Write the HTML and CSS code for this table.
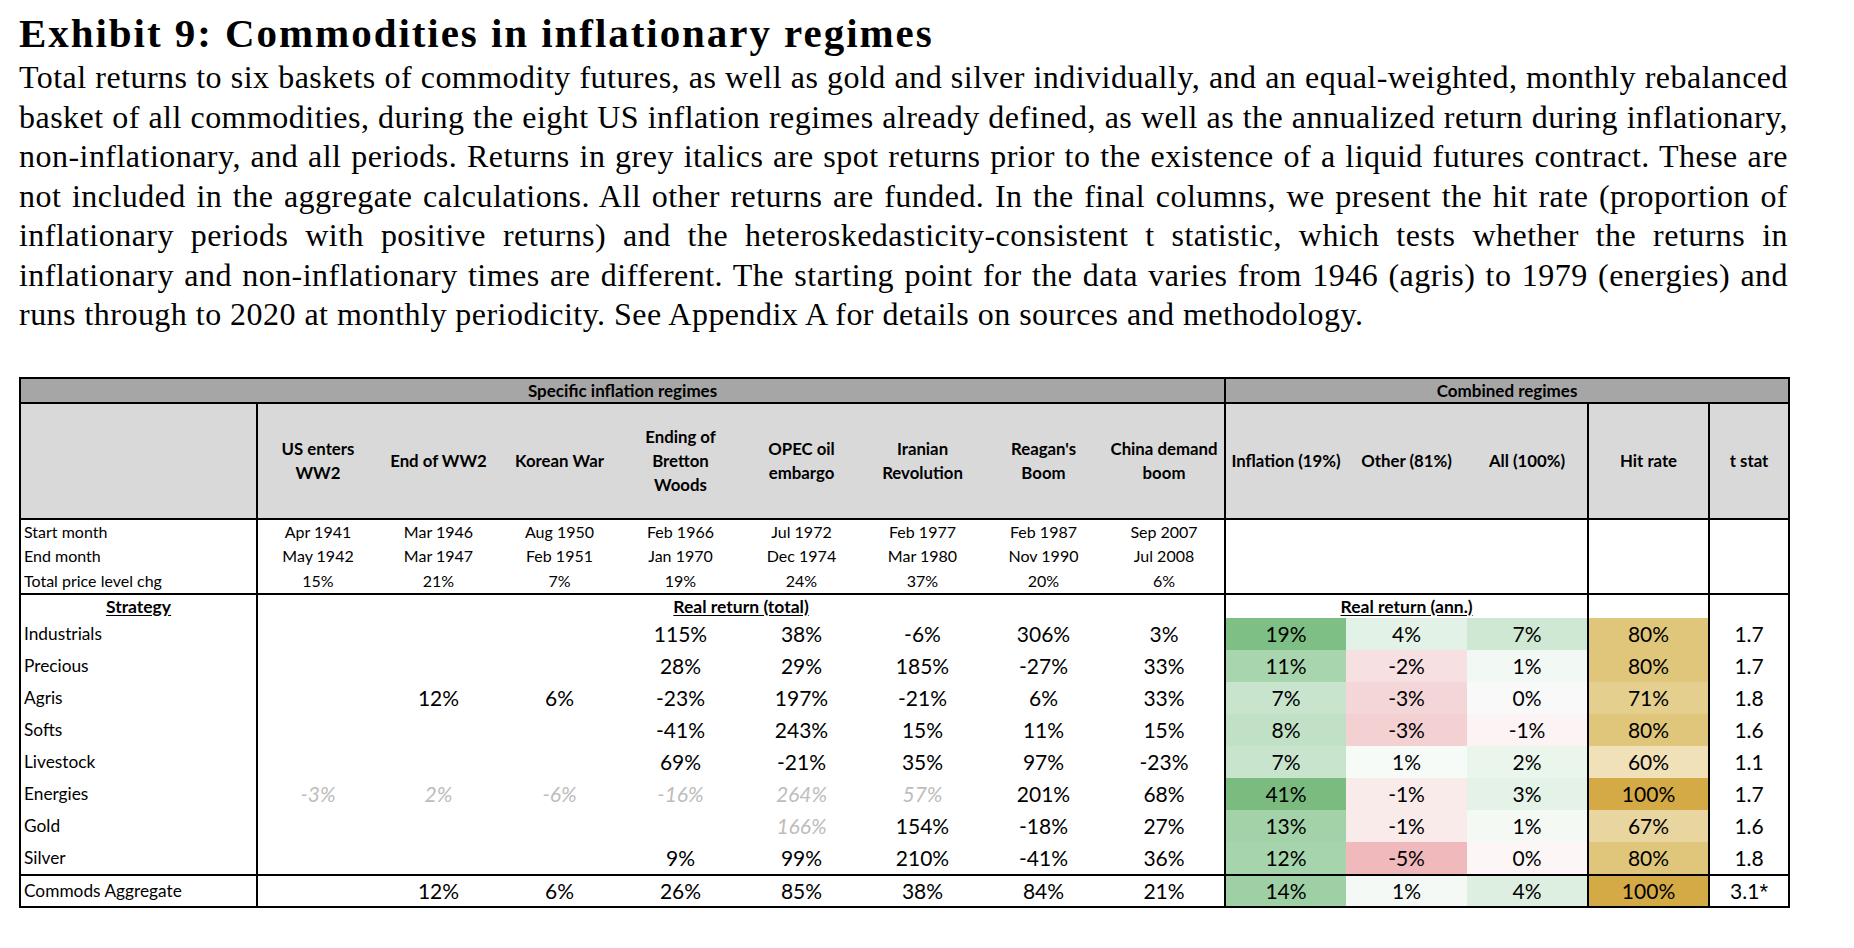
FILE: index.html
```html
<!DOCTYPE html>
<html lang="en">
<head>
<meta charset="utf-8">
<title>Exhibit 9: Commodities in inflationary regimes</title>
<link rel="stylesheet" href="styles.css">
</head>
<body>
<div class="page">
  <h1 class="title">Exhibit 9: Commodities in inflationary regimes</h1>
  <div class="lead">
    <span class="ln">Total returns to six baskets of commodity futures, as well as gold and silver individually, and an equal-weighted, monthly rebalanced</span>
    <span class="ln">basket of all commodities, during the eight US inflation regimes already defined, as well as the annualized return during inflationary,</span>
    <span class="ln">non-inflationary, and all periods. Returns in grey italics are spot returns prior to the existence of a liquid futures contract. These are</span>
    <span class="ln">not included in the aggregate calculations. All other returns are funded. In the final columns, we present the hit rate (proportion of</span>
    <span class="ln">inflationary periods with positive returns) and the heteroskedasticity-consistent t statistic, which tests whether the returns in</span>
    <span class="ln">inflationary and non-inflationary times are different. The starting point for the data varies from 1946 (agris) to 1979 (energies) and</span>
    <span class="ln last">runs through to 2020 at monthly periodicity. See Appendix A for details on sources and methodology.</span>
  </div>

  <table class="exhibit">
    <colgroup>
      <col class="w-label">
      <col class="w-col"><col class="w-col"><col class="w-col"><col class="w-col">
      <col class="w-col"><col class="w-col"><col class="w-col"><col class="w-col">
      <col class="w-col"><col class="w-col"><col class="w-col">
      <col class="w-col"><col class="w-t">
    </colgroup>
    <tr class="group-row">
      <th colspan="9" class="sep">Specific inflation regimes</th>
      <th colspan="5">Combined regimes</th>
    </tr>
    <tr class="head-row">
      <th class="lab sep"></th>
      <th>US enters<br>WW2</th>
      <th>End of WW2</th>
      <th>Korean War</th>
      <th>Ending of<br>Bretton<br>Woods</th>
      <th>OPEC oil<br>embargo</th>
      <th>Iranian<br>Revolution</th>
      <th>Reagan's<br>Boom</th>
      <th class="sep">China demand<br>boom</th>
      <th>Inflation (19%)</th>
      <th>Other (81%)</th>
      <th class="sep">All (100%)</th>
      <th class="sep">Hit rate</th>
      <th>t stat</th>
    </tr>
    <tr class="date-row">
      <td class="lab sep">Start month</td>
      <td>Apr 1941</td><td>Mar 1946</td><td>Aug 1950</td><td>Feb 1966</td><td>Jul 1972</td><td>Feb 1977</td><td>Feb 1987</td><td class="sep">Sep 2007</td>
      <td></td><td></td><td class="sep"></td><td class="sep"></td><td></td>
    </tr>
    <tr class="date-row">
      <td class="lab sep">End month</td>
      <td>May 1942</td><td>Mar 1947</td><td>Feb 1951</td><td>Jan 1970</td><td>Dec 1974</td><td>Mar 1980</td><td>Nov 1990</td><td class="sep">Jul 2008</td>
      <td></td><td></td><td class="sep"></td><td class="sep"></td><td></td>
    </tr>
    <tr class="date-row rule">
      <td class="lab sep">Total price level chg</td>
      <td>15%</td><td>21%</td><td>7%</td><td>19%</td><td>24%</td><td>37%</td><td>20%</td><td class="sep">6%</td>
      <td></td><td></td><td class="sep"></td><td class="sep"></td><td></td>
    </tr>
    <tr class="sub-row">
      <td class="sep"><span class="ul">Strategy</span></td>
      <td colspan="8" class="sep"><span class="ul">Real return (total)</span></td>
      <td colspan="3" class="sep"><span class="ul">Real return (ann.)</span></td>
      <td class="sep"></td>
      <td></td>
    </tr>
    <tr class="data-row">
      <td class="lab sep">Industrials</td>
      <td></td><td></td><td></td><td>115%</td><td>38%</td><td>-6%</td><td>306%</td><td class="sep">3%</td>
      <td style="background:#7ebf86">19%</td><td style="background:#e3f2e6">4%</td><td class="sep" style="background:#cfe8d3">7%</td>
      <td class="sep" style="background:#e0c67a">80%</td><td>1.7</td>
    </tr>
    <tr class="data-row">
      <td class="lab sep">Precious</td>
      <td></td><td></td><td></td><td>28%</td><td>29%</td><td>185%</td><td>-27%</td><td class="sep">33%</td>
      <td style="background:#a8d5ae">11%</td><td style="background:#f7e0e1">-2%</td><td class="sep" style="background:#f2f8f3">1%</td>
      <td class="sep" style="background:#e0c67a">80%</td><td>1.7</td>
    </tr>
    <tr class="data-row">
      <td class="lab sep">Agris</td>
      <td></td><td>12%</td><td>6%</td><td>-23%</td><td>197%</td><td>-21%</td><td>6%</td><td class="sep">33%</td>
      <td style="background:#c8e4cc">7%</td><td style="background:#f5d6d8">-3%</td><td class="sep" style="background:#faf9f9">0%</td>
      <td class="sep" style="background:#e5cf8f">71%</td><td>1.8</td>
    </tr>
    <tr class="data-row">
      <td class="lab sep">Softs</td>
      <td></td><td></td><td></td><td>-41%</td><td>243%</td><td>15%</td><td>11%</td><td class="sep">15%</td>
      <td style="background:#c0e1c5">8%</td><td style="background:#f3d0d2">-3%</td><td class="sep" style="background:#fcf3f4">-1%</td>
      <td class="sep" style="background:#e0c67a">80%</td><td>1.6</td>
    </tr>
    <tr class="data-row">
      <td class="lab sep">Livestock</td>
      <td></td><td></td><td></td><td>69%</td><td>-21%</td><td>35%</td><td>97%</td><td class="sep">-23%</td>
      <td style="background:#c8e4cc">7%</td><td style="background:#f7fbf7">1%</td><td class="sep" style="background:#eaf5ec">2%</td>
      <td class="sep" style="background:#f0e1b8">60%</td><td>1.1</td>
    </tr>
    <tr class="data-row">
      <td class="lab sep">Energies</td>
      <td class="spot">-3%</td><td class="spot">2%</td><td class="spot">-6%</td><td class="spot">-16%</td><td class="spot">264%</td><td class="spot">57%</td><td>201%</td><td class="sep">68%</td>
      <td style="background:#7bbb80">41%</td><td style="background:#faebeb">-1%</td><td class="sep" style="background:#e5f2e7">3%</td>
      <td class="sep" style="background:#d4aa47">100%</td><td>1.7</td>
    </tr>
    <tr class="data-row">
      <td class="lab sep">Gold</td>
      <td></td><td></td><td></td><td></td><td class="spot">166%</td><td>154%</td><td>-18%</td><td class="sep">27%</td>
      <td style="background:#a3d2a9">13%</td><td style="background:#faebeb">-1%</td><td class="sep" style="background:#f4f9f4">1%</td>
      <td class="sep" style="background:#e9d59f">67%</td><td>1.6</td>
    </tr>
    <tr class="data-row rule">
      <td class="lab sep">Silver</td>
      <td></td><td></td><td></td><td>9%</td><td>99%</td><td>210%</td><td>-41%</td><td class="sep">36%</td>
      <td style="background:#a6d4ac">12%</td><td style="background:#f0b9bb">-5%</td><td class="sep" style="background:#fcf6f6">0%</td>
      <td class="sep" style="background:#e0c67a">80%</td><td>1.8</td>
    </tr>
    <tr class="data-row agg">
      <td class="lab sep">Commods Aggregate</td>
      <td></td><td>12%</td><td>6%</td><td>26%</td><td>85%</td><td>38%</td><td>84%</td><td class="sep">21%</td>
      <td style="background:#9ecfa5">14%</td><td style="background:#f4f9f5">1%</td><td class="sep" style="background:#ddefe0">4%</td>
      <td class="sep" style="background:#d4aa47">100%</td><td class="tstat">3.1<span class="star">*</span></td>
    </tr>
  </table>
</div>
</body>
</html>
```

FILE: styles.css
```css
html, body {
  margin: 0;
  padding: 0;
  background: #ffffff;
}

.page {
  width: 1769px;
  padding: 10px 0 0 19px;
  color: #000000;
}

.title {
  margin: 0;
  font-family: "Liberation Serif", "Times New Roman", serif;
  font-weight: 700;
  font-size: 41px;
  line-height: 46px;
  letter-spacing: 1.95px;
}

.lead {
  margin-top: 2px;
  font-family: "Liberation Serif", "Times New Roman", serif;
  font-size: 32px;
  line-height: 39.5px;
  letter-spacing: 0.47px;
}

.ln {
  display: block;
  text-align: justify;
  text-align-last: justify;
  white-space: nowrap;
}

.ln.last {
  text-align-last: left;
}

.exhibit {
  margin-top: 42px;
  border-collapse: collapse;
  table-layout: fixed;
  width: 1769px;
  border: 2px solid #000000;
  font-family: Lato, "Open Sans", sans-serif;
  color: #000000;
}

.w-label { width: 237px; }
.w-col { width: 121px; }
.w-t { width: 80px; }

.exhibit th,
.exhibit td {
  padding: 0;
  text-align: center;
  vertical-align: middle;
  white-space: nowrap;
}

.exhibit .sep {
  border-right: 2px solid #000000;
}

.group-row th {
  background: #a6a6a6;
  height: 23px;
  font-size: 17px;
  font-weight: 700;
  border-bottom: 2px solid #000000;
}

.head-row th {
  background: #d9d9d9;
  height: 114px;
  font-size: 16.8px;
  font-weight: 700;
  line-height: 24px;
  border-bottom: 2px solid #000000;
}

.date-row td {
  height: 24.5px;
  font-size: 16px;
  line-height: 20px;
}

.exhibit .lab {
  text-align: left;
  padding-left: 3px;
}

.rule td {
  border-bottom: 2px solid #000000;
}

.sub-row td {
  height: 23px;
  font-size: 17.5px;
  font-weight: 700;
  line-height: 20px;
}

.ul {
  text-decoration: underline;
  text-underline-offset: 2px;
}

.data-row td {
  height: 32px;
  font-size: 21px;
  line-height: 24px;
}

.data-row td.lab {
  font-size: 17.3px;
}

.data-row td.spot {
  color: #bdbdbd;
  font-style: italic;
}

.agg td {
  height: 30px;
}

.star {
  font-family: "Liberation Sans", Arial, sans-serif;
  font-size: 22px;
  line-height: 10px;
}
```
